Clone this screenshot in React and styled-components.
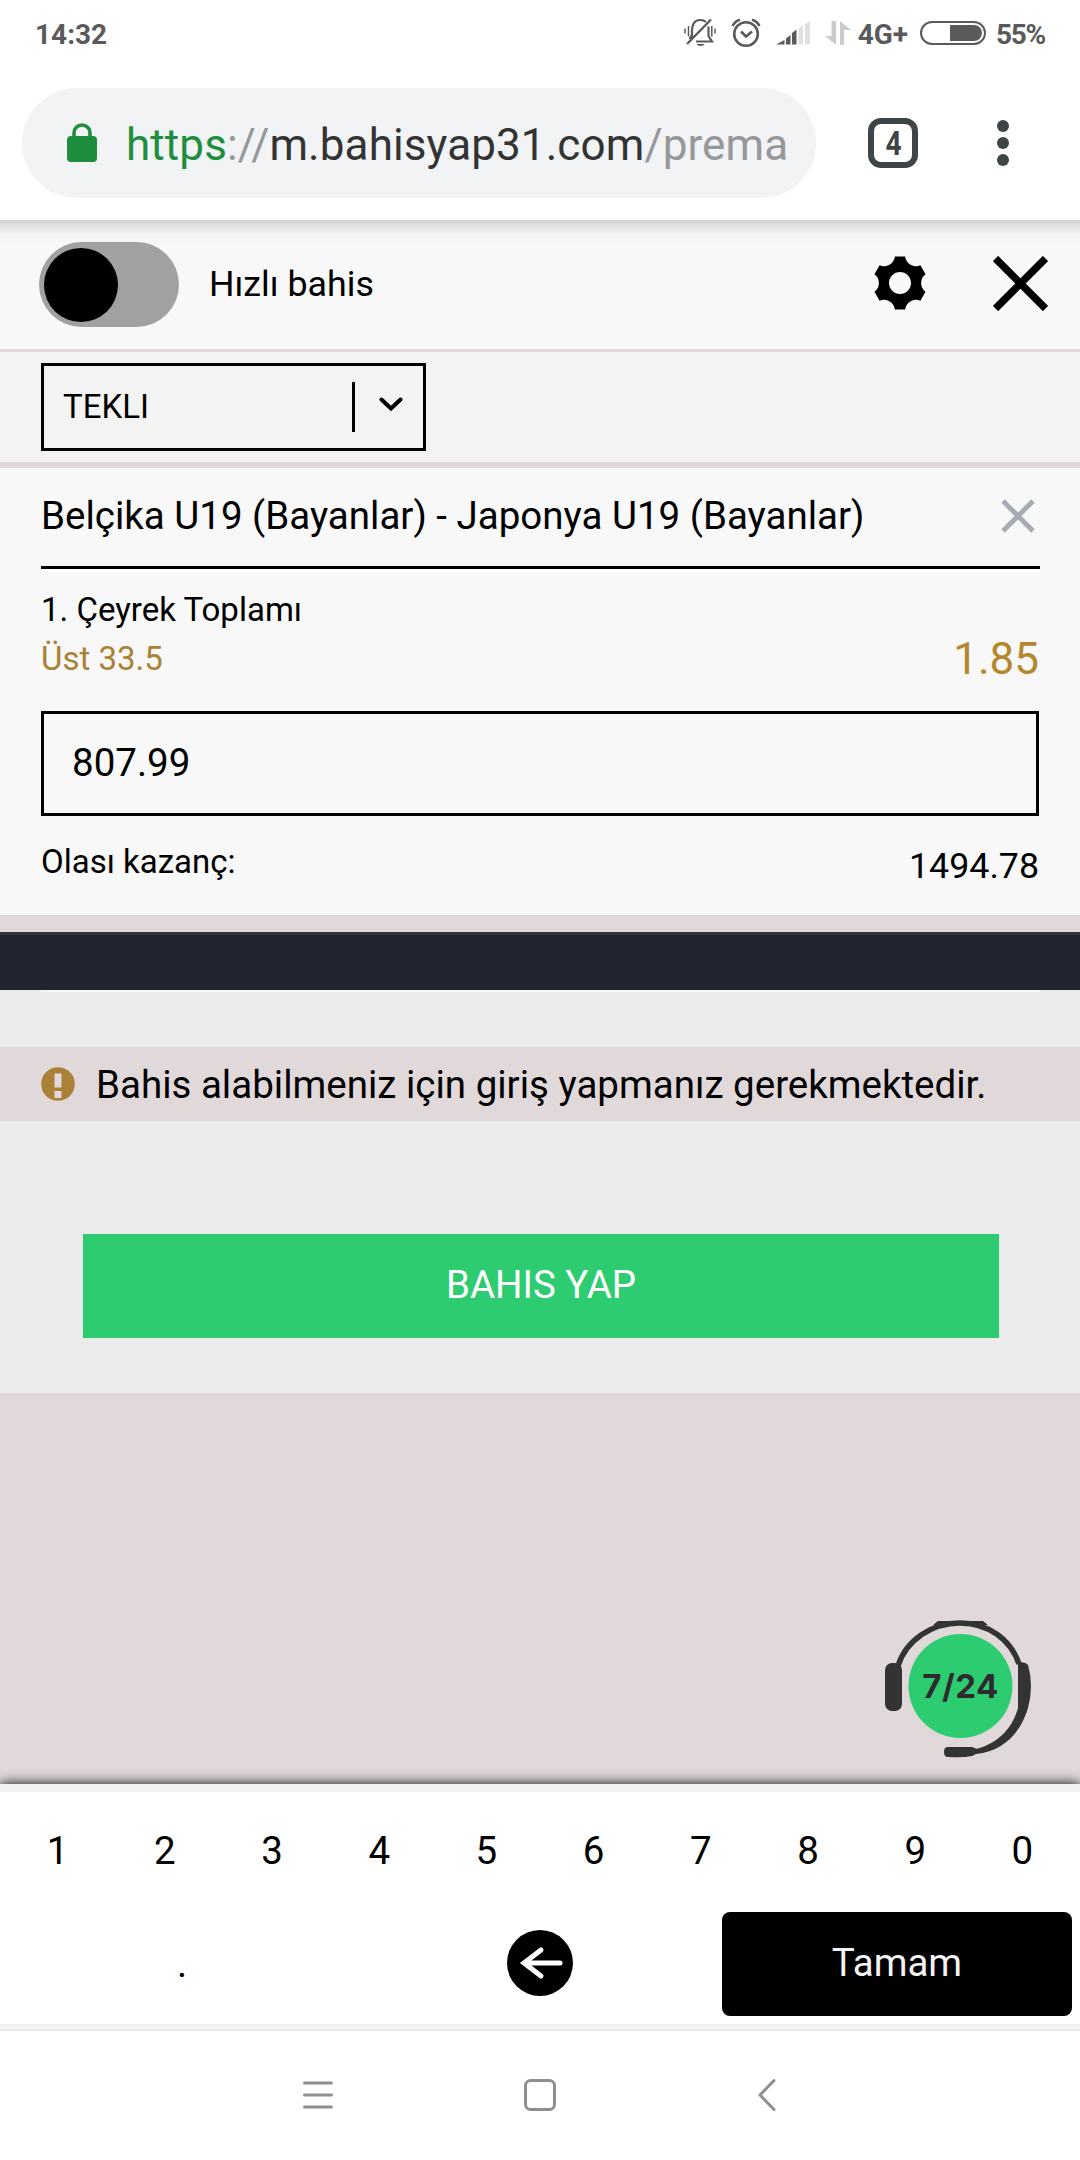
import React from 'react';
import styled, { createGlobalStyle } from 'styled-components';

const digits = ['1', '2', '3', '4', '5', '6', '7', '8', '9', '0'];

function StatusIcons(){
  return(
    <StatusRight>
      <svg width="32" height="30" viewBox="0 0 32 30" fill="none" stroke="#5a5a5a" strokeWidth="2.200">
        <path d="M8 20V12C8 6 11 2 16 2c3 0 5 1 6 2M24.500 8.500V18l3.500 5.500H12" />
        <path d="M3 26 27 1.500" strokeWidth="2.400" />
        <path d="M8 17 5.500 21" />
        <path d="M12.500 26h8c-1 2.500-7 2.500-8 0z" fill="#5a5a5a" stroke="none" />
        <path d="M1 10.500v5M4.500 8v10.500M31 10.500v5M27.800 8v10.500" strokeWidth="1.500" />
      </svg>
      <svg width="30" height="30" viewBox="0 0 30 30" fill="none" stroke="#5a5a5a" strokeWidth="2.600">
        <circle cx="15" cy="16" r="11.800" />
        <path d="M10 13.500l5 5 6-5M1.500 8C3 5 5 3 9 1.800M28.500 8C27 5 25 3 21 1.800" />
      </svg>
      <svg width="34" height="24" viewBox="0 0 34 24">
        <path d="M0 23.500 8.500 19v4.500zM10 17.500l4.500-3.500v9.500H10zM16 12l4.500-3.500v15H16z" fill="#5a5a5a" />
        <path d="M22.500 7.500 27 4v19.500h-4.500zM29 3l5-3v23.500h-5z" fill="#e0e0e0" />
      </svg>
      <Arrows width="26" height="24" viewBox="0 0 26 24" fill="#cbcbcb">
        <path d="M6.500 0H11v24L0 15h6.500zM15 24h4V9h7L15 0z" />
      </Arrows>
      <StatusText>4G+</StatusText>
      <Battery><BatteryFill /></Battery>
      <StatusText $tight>55%</StatusText>
    </StatusRight>)
}

function Headset(){
  return(
    <Support>
      <svg width="150" height="140" viewBox="0 0 150 140">
        <circle cx="76.500" cy="66" r="52" fill="#2ecc71" />
        <path d="M14 46C22 20 48 3 76 3c29 0 51 17 59 41" fill="none" stroke="#333" strokeWidth="5.500" />
        <rect x="1" y="43" width="17" height="48" rx="7" fill="#333" />
        <path d="M134 42q8 0 10 3 6 20 0 43C137 112 120 131 92 134v-5C112 124 128 110 134 88z" fill="#333" />
        <path d="M54 1h45l5 4H49z" fill="#333" />
        <path d="M64 127h24l10 4-10 5q-10 2-24 1-4 0-4-5t4-5z" fill="#333" />
      </svg>
      <SupportText>7/24</SupportText>
    </Support>)
}

function App(){
  return(
    <Screen>
      <GlobalStyle />
      <StatusBar>
        <StatusText>14:32</StatusText>
        <StatusIcons />
      </StatusBar>
      <BrowserBar>
        <UrlBox>
          <svg width="30" height="40" viewBox="0 0 30 40">
            <rect x="0" y="13" width="30" height="26" rx="4" fill="#1e8e3e" />
            <path d="M7 14V10a8 8 0 0 1 16 0v4" fill="none" stroke="#1e8e3e" strokeWidth="3.600" />
          </svg>
          <Url><Secure>https</Secure><Faded>://</Faded>m.bahisyap31.com<Faded>/prema</Faded></Url>
        </UrlBox>
        <TabCount><TabNumber>4</TabNumber></TabCount>
        <MenuDots><Dot /><Dot /><Dot /></MenuDots>
      </BrowserBar>
      <SlipHeader>
        <Toggle><Knob /></Toggle>
        <ToggleLabel>Hızlı bahis</ToggleLabel>
        <HeaderIcons>
          <svg width="52" height="54" viewBox="-26 -27 52 54">
            <path fillRule="evenodd" d="M-5.100-26.500H5.100A11 11 0 0 0 20.400-17.700L25.500-8.800A11 11 0 0 0 25.500 8.800L20.400 17.700A11 11 0 0 0 5.100 26.500H-5.100A11 11 0 0 0-20.400 17.700L-25.500 8.800A11 11 0 0 0-25.500-8.800L-20.400-17.700A11 11 0 0 0-5.100-26.500zM0-11A11 11 0 1 0 0 11A11 11 0 1 0 0-11z" />
          </svg>
          <svg width="55" height="55" viewBox="0 0 55 55">
            <path d="M2.500 2.500l50 50M52.500 2.500l-50 50" stroke="#000" strokeWidth="7.500" />
          </svg>
        </HeaderIcons>
      </SlipHeader>
      <TypeRow>
        <Select>
          <SelectText>TEKLI</SelectText>
          <SelectArrow>
            <svg width="24" height="15" viewBox="0 0 24 15">
              <path d="M2.500 2.500 12 11.500l9.500-9" fill="none" stroke="#000" strokeWidth="4" strokeLinecap="round" />
            </svg>
          </SelectArrow>
        </Select>
      </TypeRow>
      <BetCard>
        <MatchRow>
          <Match>Belçika U19 (Bayanlar) - Japonya U19 (Bayanlar)</Match>
          <svg width="34" height="34" viewBox="0 0 34 34">
            <path d="M2 2l30 30M32 2 2 32" stroke="#a5aab3" strokeWidth="4.800" />
          </svg>
        </MatchRow>
        <Market>1. Çeyrek Toplamı</Market>
        <PickRow>
          <Pick>Üst 33.5</Pick>
          <Odds>1.85</Odds>
        </PickRow>
        <Stake>807.99</Stake>
        <PayoutRow>
          <PayoutLabel>Olası kazanç:</PayoutLabel>
          <Payout>1494.78</Payout>
        </PayoutRow>
      </BetCard>
      <DarkStrip />
      <Actions>
        <ThinLine />
        <Notice>
          <svg width="34" height="34" viewBox="0 0 34 34">
            <circle cx="17" cy="17" r="16.800" fill="#aa8137" />
            <path d="M13.500 6.500h7v14h-7zM13.500 24h7v7h-7z" fill="#e0d8d9" />
          </svg>
          <NoticeText>Bahis alabilmeniz için giriş yapmanız gerekmektedir.</NoticeText>
        </Notice>
        <BetButton>BAHIS YAP</BetButton>
      </Actions>
      <Empty><Headset /></Empty>
      <Keypad>
        <DigitRow>
          {digits.map((d) => <Key key={d}>{d}</Key>)}
        </DigitRow>
        <BottomRow>
          <Key>.</Key>
          <Key>
            <svg width="66" height="66" viewBox="0 0 66 66">
              <circle cx="33" cy="33" r="33" />
              <path d="M34 20 17 33l17 13M18 33h35" fill="none" stroke="#fff" strokeWidth="5" strokeLinecap="round" />
            </svg>
          </Key>
          <DoneKey>Tamam</DoneKey>
        </BottomRow>
      </Keypad>
      <NavBar>
        <svg width="30" height="34" viewBox="0 0 30 34">
          <path d="M1.500 5h27M1.500 17h27M1.500 29h27" stroke="#8f8f8f" strokeWidth="3" strokeLinecap="round" />
        </svg>
        <HomeIcon width="32" height="34" viewBox="0 0 32 34">
          <rect x="1.500" y="2.500" width="29" height="29" rx="5" fill="none" stroke="#8f8f8f" strokeWidth="3" />
        </HomeIcon>
        <svg width="18" height="34" viewBox="0 0 18 34">
          <path d="M16 2.500 2 17l14 14.500" fill="none" stroke="#8f8f8f" strokeWidth="3" strokeLinecap="round" />
        </svg>
      </NavBar>
    </Screen>)
}
export default App;

const GlobalStyle = createGlobalStyle`
    * {
        box-sizing: border-box;
    }
    body {
        margin: 0;
    }
    svg {
        display: block;
        flex-shrink: 0;
    }
`

const Screen = styled.div`
    width: 1080px;
    height: 2160px;
    display: flex;
    flex-direction: column;
    overflow: hidden;
    background: #e0d8d9;
    color: #000;
    font-family: Roboto, "Liberation Sans", sans-serif;
    white-space: nowrap;
`

const StatusBar = styled.div`
    height: 68px;
    display: flex;
    align-items: center;
    justify-content: space-between;
    padding: 0 35px 2px 35px;
    background: #fff;
`

const StatusText = styled.span`
    padding-top: 2px;
    font-size: 28px;
    font-weight: 700;
    letter-spacing: ${({ $tight }) => $tight ? '-1.300px' : 'normal'};
    color: #5a5a5a;
`

const StatusRight = styled.div`
    display: flex;
    align-items: center;
    gap: 15px;
`

const Arrows = styled.svg`
    margin-right: -8px;
`

const Battery = styled.div`
    width: 66px;
    height: 24px;
    display: flex;
    justify-content: flex-end;
    margin: 0 -5px 0 -3px;
    padding: 2px;
    border: 2px solid #5a5a5a;
    border-radius: 12px;
`

const BatteryFill = styled.div`
    width: 32px;
    background: #5a5a5a;
    border-radius: 0 8px 8px 0;
`

const BrowserBar = styled.div`
    height: 152px;
    display: flex;
    align-items: flex-start;
    padding: 20px 22px 0;
    background: #fff;
`

const UrlBox = styled.div`
    width: 794px;
    height: 110px;
    display: flex;
    align-items: center;
    gap: 29px;
    padding-left: 45px;
    border-radius: 55px;
    background: #f1f3f5;
`

const Url = styled.div`
    padding-top: 3px;
    font-size: 44px;
    letter-spacing: 0.1px;
    color: #333;
`

const Secure = styled.span`
    color: #1e8e3e;
`

const Faded = styled.span`
    color: #969798;
`

const TabCount = styled.div`
    width: 50px;
    height: 50px;
    display: flex;
    align-items: center;
    justify-content: center;
    margin: 30px 0 0 52px;
    border: 6px solid #3f4447;
    border-radius: 13px;
    color: #3f4447;
`

const TabNumber = styled.span`
    font-size: 33px;
    font-weight: 700;
    transform: scaleX(0.85);
`

const MenuDots = styled.div`
    display: flex;
    flex-direction: column;
    gap: 5px;
    margin: 32px 0 0 79px;
`

const Dot = styled.div`
    width: 12px;
    height: 12px;
    border-radius: 50%;
    background: #3f4447;
`

const SlipHeader = styled.div`
    height: 132px;
    display: flex;
    align-items: center;
    padding: 0 32px 1px 39px;
    background: linear-gradient(#d0d0d0, #e4e4e4 7px, #f2f2f2 14px, #f8f8f8 24px);
    border-bottom: 3px solid #e0d8da;
`

const Toggle = styled.div`
    width: 140px;
    height: 85px;
    padding: 6px 5px;
    border-radius: 43px;
    background: #a1a1a1;
`

const Knob = styled.div`
    width: 74px;
    height: 74px;
    border-radius: 50%;
    background: #000;
`

const ToggleLabel = styled.div`
    margin-left: 30px;
    font-size: 35.75px;
`

const HeaderIcons = styled.div`
    display: flex;
    gap: 67px;
    margin-left: auto;
    padding-bottom: 1px;
`

const TypeRow = styled.div`
    height: 116px;
    padding: 11px 41px 0;
    background: #f3f3f3;
    border-bottom: 6px solid #e0d8da;
`

const Select = styled.div`
    width: 385px;
    height: 88px;
    display: flex;
    align-items: center;
    justify-content: space-between;
    padding: 0 0 0 19px;
    border: 3px solid #000;
`

const SelectText = styled.div`
    padding-bottom: 2px;
    font-size: 33px;
`

const SelectArrow = styled.div`
    width: 71px;
    height: 50px;
    display: flex;
    justify-content: center;
    padding: 15px 0 0 3px;
    border-left: 3px solid #000;
`

const BetCard = styled.div`
    height: 447px;
    padding: 0 41px;
    background: #f8f8f8;
`

const MatchRow = styled.div`
    height: 101px;
    display: flex;
    align-items: center;
    justify-content: space-between;
    margin-right: -1px;
    padding: 0 5px 3px 0;
    border-bottom: 3px solid #000;
    box-shadow: 0 3px 0 #fff;
`

const Match = styled.div`
    font-size: 38.5px;
`

const Market = styled.div`
    margin-top: 16px;
    font-size: 33px;
    line-height: 49px;
`

const PickRow = styled.div`
    height: 49px;
    display: flex;
    justify-content: space-between;
    line-height: 49px;
`

const Pick = styled.div`
    font-size: 33px;
    color: #aa8137;
`

const Odds = styled.div`
    padding-top: 1px;
    font-size: 44px;
    color: #b5872d;
`

const Stake = styled.div`
    height: 105px;
    display: flex;
    align-items: center;
    margin-top: 28px;
    padding: 0 28px 2px;
    border: 3px solid #000;
    font-size: 38.5px;
`

const PayoutRow = styled.div`
    height: 99px;
    display: flex;
    align-items: center;
    justify-content: space-between;
`

const PayoutLabel = styled.div`
    padding-bottom: 8px;
    font-size: 33px;
`

const Payout = styled.div`
    font-size: 35.75px;
`

const DarkStrip = styled.div`
    height: 58px;
    margin-top: 17px;
    background: #222530;
    border-top: 3px solid #2d3440;
`

const Actions = styled.div`
    height: 403px;
    background: #ebebeb;
`

const ThinLine = styled.div`
    height: 2px;
    margin: 0 40px 55px 41px;
    background: #f8f8f8;
`

const Notice = styled.div`
    height: 74px;
    display: flex;
    align-items: center;
    gap: 21px;
    padding-left: 41px;
    background: #e0d8d9;
`

const NoticeText = styled.div`
    padding-top: 1px;
    font-size: 38.5px;
`

const BetButton = styled.div`
    width: 916px;
    height: 104px;
    display: flex;
    align-items: center;
    justify-content: center;
    margin: 113px 0 0 83px;
    padding-bottom: 4px;
    background: #2ecc71;
    font-size: 38.5px;
    color: #fff;
`

const Empty = styled.div`
    position: relative;
    height: 391px;
`

/* floats over the page, above the keypad */
const Support = styled.div`
    position: absolute;
    right: 46px;
    bottom: 24px;
    width: 150px;
    height: 140px;
`

const SupportText = styled.div`
    position: absolute;
    top: 45px;
    left: 0;
    width: 153px;
    text-align: center;
    font-family: Inter, sans-serif;
    font-size: 33px;
    font-weight: 700;
    line-height: 42px;
    letter-spacing: 0.5px;
    color: #2f2a2f;
`

const Keypad = styled.div`
    position: relative;
    height: 246px;
    background: #fff;
    border-top: 8px solid #f2f2f2;
    border-bottom: 6px solid #f2f2f2;
    box-shadow: 0 0 12px #000;
`

const DigitRow = styled.div`
    height: 116px;
    display: grid;
    grid-template-columns: repeat(10, 1fr);
    padding: 3px 4px 0;
`

const BottomRow = styled.div`
    height: 116px;
    display: grid;
    grid-template-columns: repeat(3, 1fr);
    padding: 4px 3px 8px;
`

const Key = styled.div`
    display: flex;
    align-items: center;
    justify-content: center;
    padding-bottom: 2px;
    font-size: 38.5px;
`

const DoneKey = styled(Key)`
    margin: 0 5px 0 3px;
    padding-bottom: 3px;
    border-radius: 8px;
    background: #000;
    color: #f3f3f3;
`

const NavBar = styled.div`
    position: relative;
    flex: 1;
    display: flex;
    align-items: center;
    padding: 0 0 2px 303px;
    background: #fff;
    border-top: 1px solid #e0e0e0;
`

const HomeIcon = styled.svg`
    margin: 0 202px 0 191px;
`
